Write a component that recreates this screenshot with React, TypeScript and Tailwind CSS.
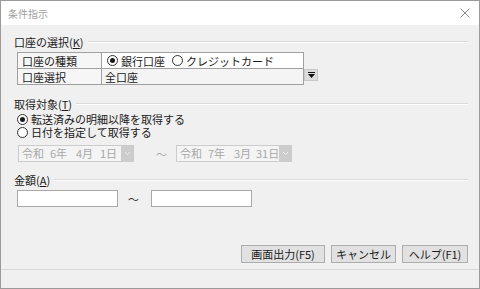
import React from "react";

const font = "font-['Noto_Sans_CJK_JP','Noto_Sans',sans-serif]";

function Radio({ checked }: { checked?: boolean }) {
  return (
    <span className="w-[11px] h-[11px] rounded-full border border-[#333333] bg-white flex items-center justify-center shrink-0">
      {checked && <span className="w-[5px] h-[5px] rounded-full bg-[#1a1a1a]" />}
    </span>
  );
}

function SectionHeader({ label, mnemonic }: { label: string; mnemonic: string }) {
  return (
    <div className="flex items-center h-[14px]">
      <span className="text-[11px] leading-[14px] text-[#1a1a1a] whitespace-nowrap">
        {label}(<span className="underline">{mnemonic}</span>)
      </span>
      <div className="flex-1 ml-[4px] border-t border-[#dadada] border-b border-b-white" />
    </div>
  );
}

function DateBox({ y, m, d }: { y: string; m: string; d: string }) {
  return (
    <div className="w-[116px] h-[17px] border border-[#cccccc] bg-[#f4f4f4] flex items-center text-[11px] leading-none text-[#a8a8a8] whitespace-nowrap">
      <span className="ml-[3px]">令和</span>
      <span className="ml-[6px] w-[17px] text-right">{y}年</span>
      <span className="ml-[9px] w-[17px] text-right">{m}月</span>
      <span className="ml-[5px] w-[19px] text-right">{d}日</span>
      <span className="ml-auto w-[12px] h-[15px] bg-[#cccccc] flex items-center justify-center shrink-0">
        <svg width="7" height="5" viewBox="0 0 7 5">
          <path d="M1 1 L3.5 3.5 L6 1" stroke="#eeeeee" strokeWidth="1" fill="none" />
        </svg>
      </span>
    </div>
  );
}

export default function App() {
  return (
    <div className={`w-[480px] h-[289px] flex flex-col border border-[#9a9a9a] bg-[#f0f0f0] overflow-hidden ${font}`}>
      <div className="h-[24px] bg-white flex items-center justify-between pl-[7px] pr-[9px] shrink-0">
        <span className="text-[10px] text-[#a0a0a0]">条件指示</span>
        <svg width="10" height="10" viewBox="0 0 10 10">
          <path d="M0.5 0.5 L9.5 9.5 M9.5 0.5 L0.5 9.5" stroke="#8a8a8a" strokeWidth="1" />
        </svg>
      </div>

      <div className="flex-1 flex flex-col pl-[13px] pr-[11px]">
        <div className="mt-[10px]">
          <SectionHeader label="口座の選択" mnemonic="K" />
        </div>

        <div className="flex items-start ml-[3px] mt-[3px]">
          <div className="w-[287px] border border-[#a0a0a0] text-[11px] leading-[14px] text-[#1a1a1a]">
            <div className="flex h-[16px] border-b border-[#a0a0a0]">
              <div className="w-[84px] border-r border-[#a0a0a0] bg-[#f6f6f6] pl-[4px] flex items-center">
                口座の種類
              </div>
              <div className="flex-1 bg-white flex items-center pl-[5px]">
                <Radio checked />
                <span className="ml-[3px]">銀行口座</span>
                <span className="ml-[7px]"><Radio /></span>
                <span className="ml-[3px]">クレジットカード</span>
              </div>
            </div>
            <div className="flex h-[15px]">
              <div className="w-[84px] border-r border-[#a0a0a0] bg-[#f6f6f6] pl-[4px] flex items-center">
                口座選択
              </div>
              <div className="flex-1 bg-[#f4f4f4] flex items-center pl-[3px]">全口座</div>
            </div>
          </div>
          <div className="mt-[17px] w-[14px] h-[12px] bg-[#dcdcdc] border border-[#c8c8c8] flex items-center justify-center">
            <svg width="7" height="6" viewBox="0 0 7 6">
              <rect x="0" y="0" width="7" height="1" fill="#111" />
              <path d="M0 2 L7 2 L3.5 6 Z" fill="#111" />
            </svg>
          </div>
        </div>

        <div className="mt-[12px]">
          <SectionHeader label="取得対象" mnemonic="T" />
        </div>
        <div className="flex items-center h-[13px] mt-[2px] ml-[3px] text-[11px] leading-[13px] text-[#1a1a1a]">
          <Radio checked />
          <span className="ml-[3px]">転送済みの明細以降を取得する</span>
        </div>
        <div className="flex items-center h-[13px] ml-[3px] text-[11px] leading-[13px] text-[#1a1a1a]">
          <Radio />
          <span className="ml-[3px]">日付を指定して取得する</span>
        </div>
        <div className="flex items-center mt-[6px] ml-[4px]">
          <DateBox y="6" m="4" d="1" />
          <span className="ml-[22px] text-[11px] leading-[14px] text-[#a8a8a8]">～</span>
          <span className="ml-[9px]">
            <DateBox y="7" m="3" d="31" />
          </span>
        </div>

        <div className="mt-[11px]">
          <SectionHeader label="金額" mnemonic="A" />
        </div>
        <div className="flex items-center mt-[3px] ml-[3px]">
          <div className="w-[101px] h-[17px] border border-[#a8a8a8] bg-white" />
          <span className="ml-[10px] text-[11px] leading-[14px] text-[#333333]">～</span>
          <div className="ml-[12px] w-[101px] h-[17px] border border-[#a8a8a8] bg-white" />
        </div>

        <div className="flex justify-end gap-[6px] mt-[38px] text-[11px] leading-[14px] text-[#1a1a1a]">
          <button className="w-[84px] h-[18px] bg-[#e1e1e1] border border-[#adadad] flex items-center justify-center">
            画面出力(F5)
          </button>
          <button className="w-[65px] h-[18px] bg-[#e1e1e1] border border-[#adadad] flex items-center justify-center">
            キャンセル
          </button>
          <button className="w-[66px] h-[18px] bg-[#e1e1e1] border border-[#adadad] flex items-center justify-center">
            ヘルプ(F1)
          </button>
        </div>
      </div>

      <div className="h-[19px] shrink-0 border-t border-[#d8d8d8] bg-[#f0f0f0]" />
    </div>
  );
}
